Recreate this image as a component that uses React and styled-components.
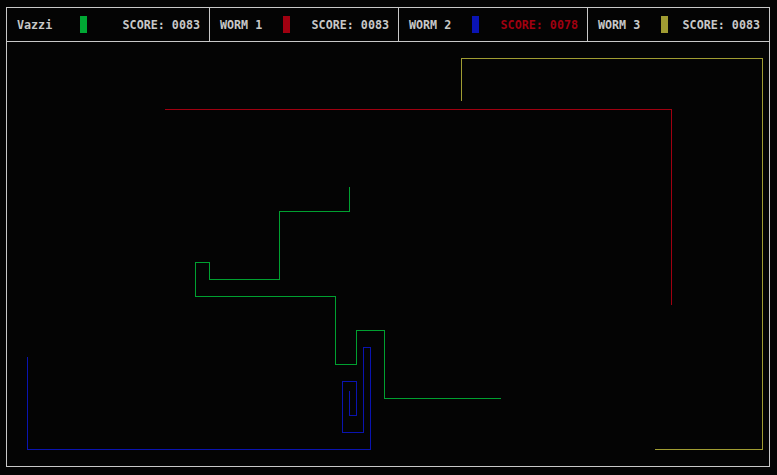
import styled, { createGlobalStyle } from 'styled-components';

const GlobalStyle = createGlobalStyle`
  html, body {
    margin: 0;
    padding: 0;
    background: #040404;
  }
`;

const players = [
  { name: 'Vazzi', color: '#00a834', score: 83, width: 203 },
  { name: 'WORM 1', color: '#a00010', score: 83, width: 189 },
  { name: 'WORM 2', color: '#0a14b4', score: 78, width: 189, warn: true },
  { name: 'WORM 3', color: '#a09c32', score: 83 },
];

const trails = [
  {
    color: '#a09c32',
    points: [[461, 100], [461, 58], [762, 58], [762, 449], [654, 449]],
  },
  {
    color: '#a00010',
    points: [[164, 109], [671, 109], [671, 304]],
  },
  {
    color: '#00a030',
    points: [
      [349, 186], [349, 211], [279, 211], [279, 279], [209, 279], [209, 262],
      [195, 262], [195, 296], [335, 296], [335, 364], [356, 364], [356, 330],
      [384, 330], [384, 398], [500, 398],
    ],
  },
  {
    color: '#0a14b0',
    points: [
      [27, 356], [27, 449], [370, 449], [370, 347], [363, 347], [363, 432],
      [342, 432], [342, 381], [356, 381], [356, 415], [349, 415], [349, 390],
    ],
  },
];

const Frame = styled.div`
  margin: 7px 0 0 6px;
  width: 762px;
  border: 1px solid #c8c8c8;
  background: #040404;
  font-family: 'DejaVu Sans Mono', 'Liberation Mono', monospace;
  font-weight: bold;
  font-size: 11.7px;
  color: #c8c8c8;
`;

const Header = styled.div`
  display: flex;
  height: 33px;
  border-bottom: 1px solid #c8c8c8;
`;

const Cell = styled.div`
  display: flex;
  align-items: center;
  box-sizing: border-box;
  padding: 0 9px 0 10px;
  flex: ${(p) => (p.$width ? `0 0 ${p.$width}px` : '1 1 auto')};
  &:not(:last-child) {
    border-right: 1px solid #c8c8c8;
  }
`;

const Name = styled.span`
  width: 63px;
  white-space: pre;
`;

const Swatch = styled.span`
  width: 7px;
  height: 17px;
  background: ${(p) => p.$color};
`;

const Score = styled.span`
  margin-left: auto;
  white-space: pre;
  color: ${(p) => (p.$warn ? '#a00010' : '#c8c8c8')};
`;

const Arena = styled.svg`
  display: block;
  width: 762px;
  height: 424px;
`;

const pad = (n) => String(n).padStart(4, '0');

export default function App() {
  return (
    <>
      <GlobalStyle />
      <Frame>
        <Header>
          {players.map((p) => (
            <Cell key={p.name} $width={p.width}>
              <Name>{p.name}</Name>
              <Swatch $color={p.color} />
              <Score $warn={p.warn}>SCORE: {pad(p.score)}</Score>
            </Cell>
          ))}
        </Header>
        <Arena viewBox="7 42 762 424" shapeRendering="crispEdges">
          {trails.map((t) => (
            <polyline
              key={t.color}
              points={t.points.map(([x, y]) => `${x + 0.5},${y + 0.5}`).join(' ')}
              fill="none"
              stroke={t.color}
              strokeWidth="1"
            />
          ))}
        </Arena>
      </Frame>
    </>
  );
}
